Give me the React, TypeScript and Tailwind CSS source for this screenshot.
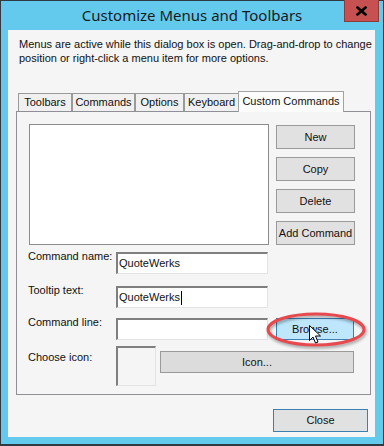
export default function App() {
  return (
    <div className="w-[384px] h-[446px] border-t border-l border-r border-b-2 border-[#2f3b42] bg-[#63caee] flex flex-col font-['Liberation_Sans',Arial,sans-serif] text-[11px] text-[#111]">
      {/* title bar */}
      <div className="h-[29px] relative flex items-center justify-center">
        <span className="text-[15px] text-[#1a1a1a] font-['Noto_Sans',sans-serif] -mt-[1px]">
          Customize Menus and Toolbars
        </span>
        <div className="absolute right-[4px] -top-px w-[35px] h-[22px] bg-[#c75050] border border-t-0 border-[#8a3b3b] flex items-center justify-center">
          <svg width="11" height="10" viewBox="0 0 11 10">
            <path d="M1.5 1.5 L9.5 8.5 M9.5 1.5 L1.5 8.5" stroke="#000" strokeWidth="2.6" strokeLinecap="square" />
          </svg>
        </div>
      </div>

      <div className="ml-[7px] mr-[8px] mb-[7px] flex-1 bg-[#f5f5f5] flex flex-col overflow-hidden">
        <p className="pt-[7px] pl-[11px] leading-[14px] whitespace-nowrap">
          Menus are active while this dialog box is open. Drag-and-drop to change
          <br />
          position or right-click a menu item for more options.
        </p>

        {/* tabs */}
        <div className="mt-[26px] ml-[10px] flex items-end h-[20px]">
          <Tab w="w-[54px]">Toolbars</Tab>
          <Tab w="w-[63px]">Commands</Tab>
          <Tab w="w-[49px]">Options</Tab>
          <Tab w="w-[55px]">Keyboard</Tab>
          <div className="relative z-10 -ml-px -mb-px w-[106px] h-[21px] bg-[#fcfcfc] border border-b-0 border-[#a3a3a3] flex items-center justify-center pb-[2px]">
            Custom Commands
          </div>
        </div>

        <div className="ml-[8px] w-[355px] h-[284px] border border-[#8e9096] pt-[12px] pl-[12px]">
          <div className="flex">
            <div className="w-[240px] h-[121px] bg-white border border-[#8c8c8c]" />
            <div className="ml-[7px] mt-[1px] flex flex-col gap-[8px]">
              <Btn>New</Btn>
              <Btn>Copy</Btn>
              <Btn>Delete</Btn>
              <Btn>Add Command</Btn>
            </div>
          </div>

          <div className="flex mt-[7px] -ml-px">
            <span className="w-[88px] -mt-[2px] leading-[13px]">Command name:</span>
            <Field>QuoteWerks</Field>
          </div>
          <div className="flex mt-[12px] -ml-px">
            <span className="w-[88px] -mt-[2px] leading-[13px]">Tooltip text:</span>
            <Field>
              QuoteWerks<span className="inline-block w-px h-[14px] bg-black ml-px" />
            </Field>
          </div>
          <div className="flex mt-[10px] -ml-px">
            <span className="w-[88px] -mt-[2px] leading-[13px]">Command line:</span>
            <Field />
            <div className="relative ml-[8px]">
              <div className="w-[78px] h-[22px] bg-[#bee6fd] border border-[#3c7fb1] flex items-center justify-center">
                Browse...
              </div>
              <svg
                className="absolute -left-[10px] -top-[6px] drop-shadow-[1px_2px_1.5px_rgba(0,0,0,0.35)]"
                width="101"
                height="35"
                viewBox="0 0 101 35"
              >
                <ellipse cx="50" cy="17.5" rx="48" ry="15.5" fill="none" stroke="#e64a4f" strokeWidth="3" />
              </svg>
              <svg className="absolute left-[33px] top-[7px]" width="13" height="20" viewBox="0 0 13 20">
                <path
                  d="M0.5 0.5 V15.5 L4 12 L6.5 18 L9 17 L6.5 11 H11.5 Z"
                  fill="#fff"
                  stroke="#000"
                  strokeWidth="1"
                  strokeLinejoin="miter"
                />
              </svg>
            </div>
          </div>
          <div className="flex mt-[6px] -ml-px">
            <span className="w-[88px] mt-[5px] leading-[13px]">Choose icon:</span>
            <div className="w-[40px] h-[40px] border-t-2 border-l-2 border-r border-b border-t-[#7f7f7f] border-l-[#7f7f7f] border-r-[#e3e3e3] border-b-[#e3e3e3] bg-[#f5f5f5]" />
            <div className="ml-[4px] mt-[5px] w-[194px] h-[22px] bg-[#dcdcdc] border border-[#9a9a9a] flex items-center justify-center">
              Icon...
            </div>
          </div>
        </div>

        <div className="flex justify-end mt-[14px] mr-[7px]">
          <div className="w-[95px] h-[23px] bg-[#e1e1e1] border border-[#3c7fb1] flex items-center justify-center">
            Close
          </div>
        </div>
      </div>
    </div>
  );
}

function Tab({ w, children }: { w: string; children: React.ReactNode }) {
  return (
    <div className={`${w} h-[18px] bg-[#f0f0f0] border border-b-0 border-[#9a9a9a] flex items-center justify-center`}>
      {children}
    </div>
  );
}

function Btn({ children }: { children: React.ReactNode }) {
  return (
    <div className="w-[79px] h-[24px] bg-[#e1e1e1] border border-[#9a9a9a] flex items-center justify-center">
      {children}
    </div>
  );
}

function Field({ children }: { children?: React.ReactNode }) {
  return (
    <div className="w-[152px] h-[22px] bg-white border-t-2 border-l-2 border-r border-b border-t-[#7f7f7f] border-l-[#7f7f7f] border-r-[#e3e3e3] border-b-[#e3e3e3] flex items-center pl-px whitespace-nowrap">
      {children}
    </div>
  );
}
